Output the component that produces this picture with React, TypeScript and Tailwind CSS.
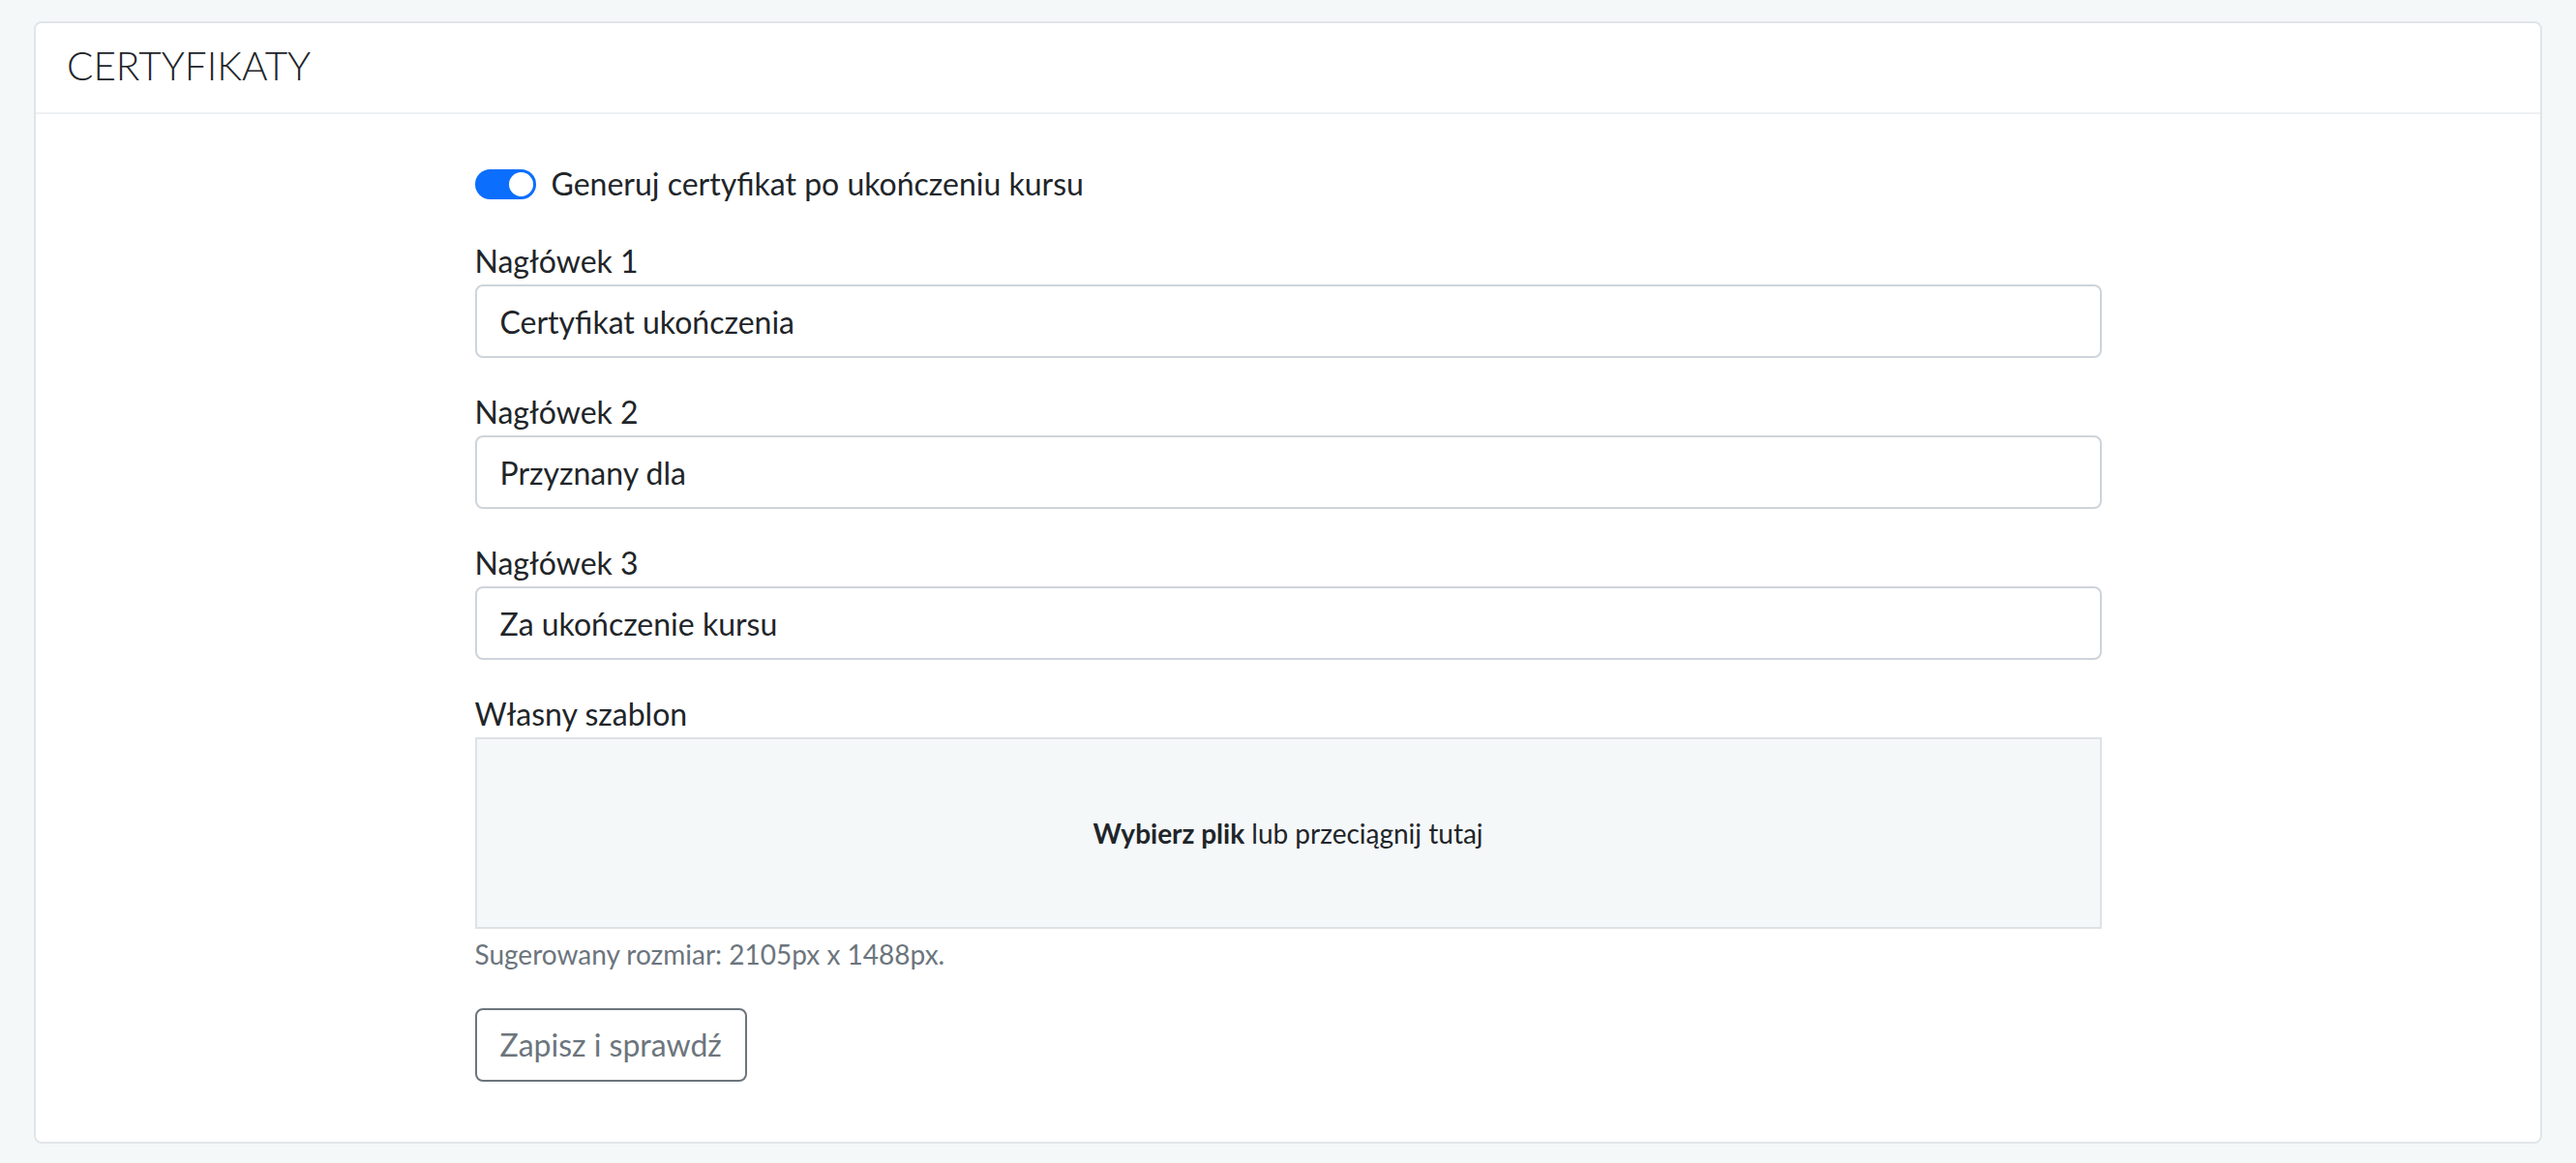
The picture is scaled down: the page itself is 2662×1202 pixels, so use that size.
const fields = [
  { label: 'Nagłówek 1', value: 'Certyfikat ukończenia' },
  { label: 'Nagłówek 2', value: 'Przyznany dla' },
  { label: 'Nagłówek 3', value: 'Za ukończenie kursu' },
];

const Toggle: React.FC = () => (
  <span className="flex h-[31px] w-[63px] items-center justify-end rounded-full bg-[#0b6efd] pr-[3px]">
    <span className="h-[25px] w-[25px] rounded-full bg-white" />
  </span>
);

export default function App() {
  return (
    <div className="min-h-screen bg-[#f5f8f9] px-[35px] pt-[22px] pb-[20px] font-['Lato',sans-serif] text-[#212529]">
      <div className="rounded-[8px] border-2 border-[#e1e5e8] bg-white">
        <div className="border-b-2 border-[#eef1f3] px-[32px] pt-[20px] pb-[24px]">
          <h2 className="text-[40.5px] leading-[48px] font-light">CERTYFIKATY</h2>
        </div>
        <div className="flex justify-center pt-[48px] pb-[62px]">
          <div className="w-[1681px]">
            <label className="mb-[32px] flex items-center gap-[16px] text-[32px] leading-[48px]">
              <Toggle />
              <span>Generuj certyfikat po ukończeniu kursu</span>
            </label>

            {fields.map((field) => (
              <div key={field.label} className="mb-[32px]">
                <label className="block text-[32px] leading-[48px]">{field.label}</label>
                <input
                  readOnly
                  value={field.value}
                  className="block h-[76px] w-full rounded-[8px] border-2 border-[#ced4da] bg-white px-[24px] text-[32px] text-[#212529] outline-none"
                />
              </div>
            ))}

            <div>
              <label className="block text-[32px] leading-[48px]">Własny szablon</label>
              <div className="flex h-[198px] items-center justify-center border-2 border-[#dee2e6] bg-[#f5f8f9] text-[28px]">
                <span>
                  <b className="font-bold">Wybierz plik</b> lub przeciągnij tutaj
                </span>
              </div>
              <p className="mt-[5px] text-[28px] leading-[42px] text-[#6c757d]">
                Sugerowany rozmiar: 2105px x 1488px.
              </p>
            </div>

            <button className="mt-[35px] h-[76px] rounded-[8px] border-2 border-[#6c757d] bg-white px-[24px] text-[32px] text-[#6c757d]">
              Zapisz i sprawdź
            </button>
          </div>
        </div>
      </div>
    </div>
  );
}
